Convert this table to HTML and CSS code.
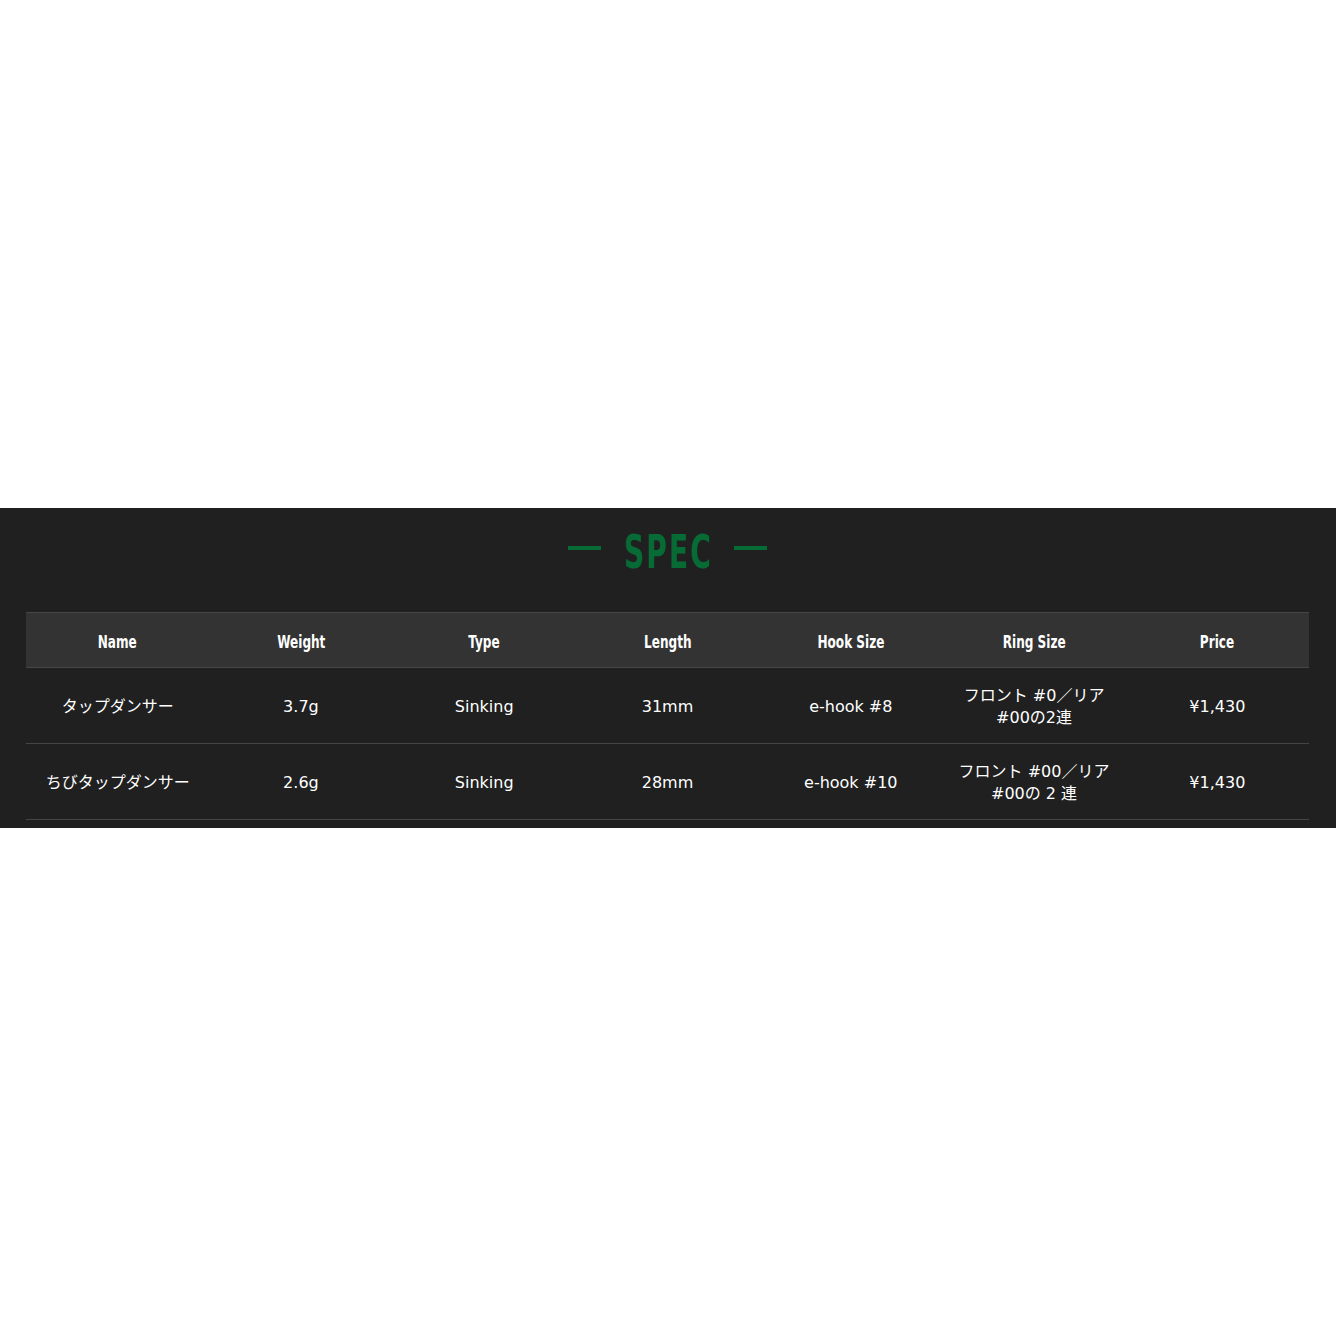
FILE: index.html
```html
<!DOCTYPE html>
<html lang="ja">
<head>
<meta charset="utf-8">
<link rel="stylesheet" href="styles.css">
</head>
<body>
<div class="top-space"></div>
<section class="spec">
  <h2 class="spec-title"><span class="bar"></span><span class="title-text">SPEC</span><span class="bar"></span></h2>
  <table class="spec-table">
    <thead>
      <tr>
        <th><span class="th-text">Name</span></th>
        <th><span class="th-text">Weight</span></th>
        <th><span class="th-text">Type</span></th>
        <th><span class="th-text">Length</span></th>
        <th><span class="th-text">Hook Size</span></th>
        <th><span class="th-text">Ring Size</span></th>
        <th><span class="th-text">Price</span></th>
      </tr>
    </thead>
    <tbody>
      <tr>
        <td>タップダンサー</td>
        <td>3.7g</td>
        <td>Sinking</td>
        <td>31mm</td>
        <td>e-hook #8</td>
        <td>フロント #0／リア<br>#00の2連</td>
        <td>¥1,430</td>
      </tr>
      <tr>
        <td>ちびタップダンサー</td>
        <td>2.6g</td>
        <td>Sinking</td>
        <td>28mm</td>
        <td>e-hook #10</td>
        <td>フロント #00／リア<br>#00の 2 連</td>
        <td>¥1,430</td>
      </tr>
    </tbody>
  </table>
</section>
</body>
</html>
```

FILE: styles.css
```css
html, body {
  margin: 0;
  padding: 0;
  background: #ffffff;
}
body {
  font-family: "DejaVu Sans", "Noto Sans CJK JP", sans-serif;
}
.top-space {
  height: 508px;
}
.spec {
  background: #202020;
  padding: 22px 27px 8px 26px;
}
.spec-title {
  margin: 0 0 38px;
  display: flex;
  justify-content: center;
  align-items: center;
  gap: 0;
  height: 44px;
}
.bar {
  width: 33px;
  height: 4px;
  margin-bottom: 8px;
  background: #066b35;
}
.title-text {
  display: inline-block;
  margin: 0 1px 0 2px;
  font-family: "DejaVu Sans", sans-serif;
  font-stretch: condensed;
  font-weight: bold;
  font-size: 46px;
  line-height: 44px;
  color: #066b35;
  letter-spacing: 3px;
  transform: scaleX(0.68);
}
.spec-table {
  width: 100%;
  border-collapse: collapse;
  table-layout: fixed;
  color: #ffffff;
}
.spec-table th {
  background: #333333;
  border-top: 1px solid #454545;
  border-bottom: 1px solid #454545;
  height: 52px;
  padding: 2px 0 0;
  text-align: center;
}
.th-text {
  display: inline-block;
  font-family: "DejaVu Sans", sans-serif;
  font-stretch: condensed;
  font-weight: bold;
  font-size: 18px;
  transform: scaleX(0.745);
}
.spec-table td {
  height: 73px;
  padding: 2px 0 0;
  text-align: center;
  border-bottom: 1px solid #454545;
  font-size: 16px;
  line-height: 22px;
}
```
